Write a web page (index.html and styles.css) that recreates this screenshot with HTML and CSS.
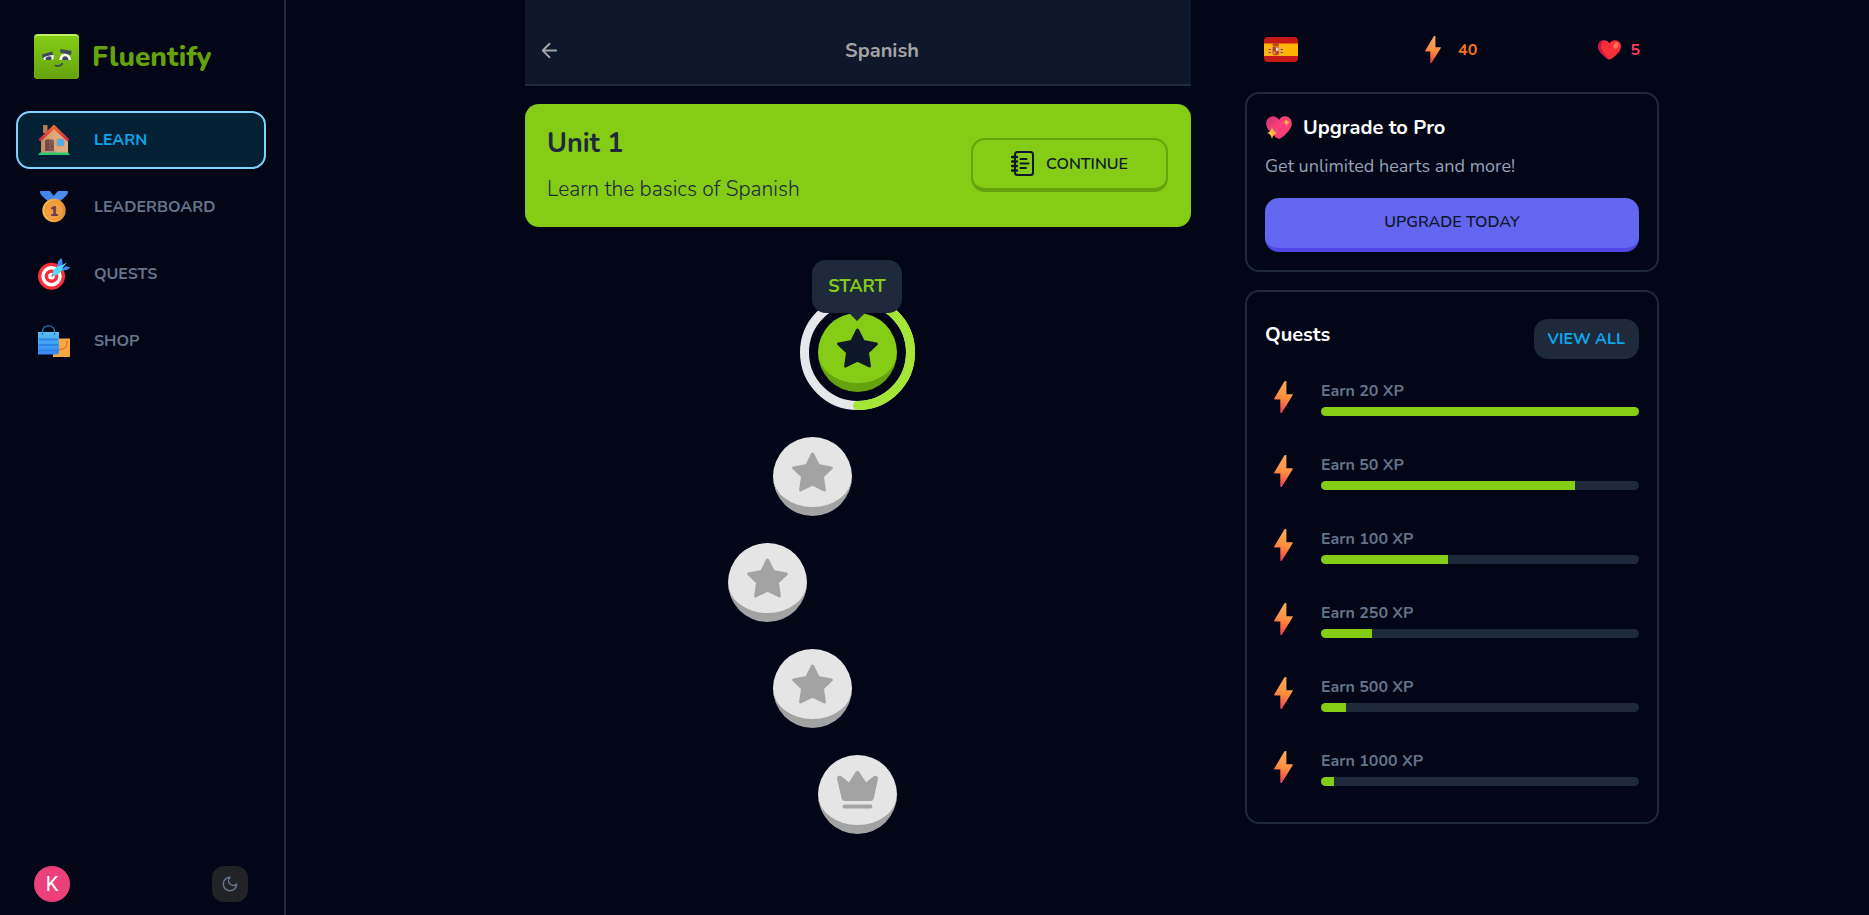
FILE: index.html
```html
<!DOCTYPE html>
<html lang="en">
<head>
<meta charset="utf-8">
<title>Fluentify</title>
<meta name="viewport" content="width=device-width, initial-scale=1">
<link rel="stylesheet" href="styles.css">
</head>
<body>
<svg class="defs" width="0" height="0" aria-hidden="true">
  <defs>
    <linearGradient id="g-bolt" x1="0.6" y1="0" x2="0.4" y2="1"><stop offset="0" stop-color="#f3ad61"/><stop offset=".5" stop-color="#fd9040"/><stop offset=".75" stop-color="#f9663f"/><stop offset="1" stop-color="#e8395a"/></linearGradient>
    <linearGradient id="g-logo" x1="0" y1="0" x2="0" y2="1"><stop offset="0" stop-color="#84cc16"/><stop offset="1" stop-color="#65a30d"/></linearGradient>
    <linearGradient id="g-wall" x1="0" y1="0" x2="1" y2="0"><stop offset="0" stop-color="#c58a5c"/><stop offset=".4" stop-color="#dda677"/><stop offset="1" stop-color="#e2ac82"/></linearGradient>
    <linearGradient id="g-roof" x1="0" y1="0" x2="0" y2="1"><stop offset="0" stop-color="#f4722f"/><stop offset="1" stop-color="#cf2340"/></linearGradient>
    <linearGradient id="g-gold" x1="0" y1="0" x2="1" y2="0"><stop offset="0" stop-color="#ffb648"/><stop offset=".65" stop-color="#f4a13c"/><stop offset="1" stop-color="#d98a35"/></linearGradient>
    <linearGradient id="g-bag" x1="0" y1="0" x2="0" y2="1"><stop offset="0" stop-color="#5cbcf0"/><stop offset=".5" stop-color="#41a4f8"/><stop offset="1" stop-color="#3b86f4"/></linearGradient>
    <linearGradient id="g-pro" x1="0" y1="0" x2="1" y2="1"><stop offset="0" stop-color="#c73470"/><stop offset=".45" stop-color="#ff3f7c"/><stop offset="1" stop-color="#f83a70"/></linearGradient>
    <symbol id="bolt" viewBox="0 0 19 32"><path d="M11.300 0H11.800Q12.400 0 12.400.7V13.300H18.300Q19.200 13.300 18.800 14.100L8 31.500Q7.700 32 7.100 32Q6.300 32 6.300 31.300V18.500H.7Q-.2 18.500.2 17.600L10.300.6Q10.700 0 11.300 0Z" fill="url(#g-bolt)"/></symbol>
    <symbol id="star" viewBox="0 0 124 119"><path d="M62 5 79.500 39.500 119 47 92 73 98 114 62 96.500 26 114 32 73 5 47 44.500 39.500Z" fill="currentColor" stroke="currentColor" stroke-width="9" stroke-linejoin="round"/></symbol>
  </defs>
</svg>
<div class="app">
  <aside class="sidebar">
    <a class="brand" href="#">
      <svg class="brand-logo" viewBox="0 0 45 45" aria-hidden="true">
        <rect width="45" height="45" rx="4" fill="#bef264"/>
        <path d="M0 5Q0 2 3 2H42Q45 2 45 5V41Q45 45 41 45H4Q0 45 0 41Z" fill="url(#g-logo)"/>
        <path d="M8 20.500 18.300 17.600 19.200 21.200 8.600 24Z" fill="#3e4a5b"/>
        <path d="M9.500 24Q11 22 19.500 21Q20.500 25 18 26H11Q9 26 9.500 24Z" fill="#fff"/>
        <path d="M11.500 24Q14 21 17.500 22.800V26H12Z" fill="#3e4a5b"/>
        <path d="M26.500 15 37.600 17 37 21 26.200 18.400Z" fill="#3e4a5b"/>
        <path d="M25.400 26Q26 19.500 31 19.800Q36.400 20 37 26Z" fill="#fff"/>
        <path d="M28 26Q28.300 22.300 31.200 22.300Q34 22.300 34.500 26Z" fill="#3e4a5b"/>
        <path d="M21.500 31.600Q26 33 28.300 29.700" fill="none" stroke="#3e4a5b" stroke-width="2" stroke-linecap="round"/>
      </svg>
      <span class="brand-name">Fluentify</span>
    </a>
    <nav class="nav">
      <a class="nav-item is-active" href="#">
        <svg class="nav-icon" viewBox="0 0 32 32" aria-hidden="true">
          <path d="M5 1.500Q5 1 5.500 1H9Q9.500 1 9.500 1.500V9H5Z" fill="#b97a52"/>
          <path d="M3 15 16 3 30 15V29H3Z" fill="url(#g-wall)"/>
          <path d="M.5 15.500 16 .5 31.500 15.500 29.500 17.500 16 5.200 2.500 17.500Z" fill="url(#g-roof)"/>
          <path d="M7 17.500Q7 15.500 9 15.500H14Q16 15.500 16 17.500V29H7Z" fill="#85584f"/>
          <path d="M7.500 17Q8 15.500 9.500 15.500H11V29H7Z" fill="#744a46"/>
          <circle cx="14" cy="22.500" r=".7" fill="#4d3035"/>
          <rect x="19" y="15" width="7" height="7" rx=".6" fill="#47b2ef" stroke="#c98d61" stroke-width=".6"/>
          <path d="M6 27H17V29H6Z" fill="#ae9790"/>
          <path d="M2 28.500H30L32 31H0Z" fill="#2fca68"/>
        </svg>
        <span>LEARN</span>
      </a>
      <a class="nav-item" href="#">
        <svg class="nav-icon" viewBox="0 0 32 32" aria-hidden="true">
          <path d="M2.500 0H12L18 8 11 11Q2 4 2 1.500Q2 0 2.500 0Z" fill="#4386ea"/>
          <path d="M29.500 0H20L12 9 21 11Q30 4 30 1.500Q30 0 29.500 0Z" fill="#4c8df0"/>
          <circle cx="16" cy="19.500" r="11.700" fill="url(#g-gold)"/>
          <circle cx="16" cy="19.500" r="9" fill="#f0a03e" stroke="#e59136" stroke-width=".8"/>
          <text class="medal-digit" x="16" y="25" text-anchor="middle">1</text>
        </svg>
        <span>LEADERBOARD</span>
      </a>
      <a class="nav-item" href="#">
        <svg class="nav-icon" viewBox="0 0 32 32" aria-hidden="true">
          <circle cx="13.500" cy="18.300" r="13.500" fill="#f5303b"/>
          <circle cx="13.500" cy="18.300" r="10.200" fill="#fff"/>
          <circle cx="13.500" cy="18.300" r="6.800" fill="#f5303b"/>
          <circle cx="13.500" cy="18.300" r="3.300" fill="#fff"/>
          <path d="M14 18 17 14.500" stroke="#81667c" stroke-width="1.500" stroke-linecap="round"/>
          <path d="M19 10 20 3.500 23 .3Q24 .3 24.500 4L24 9.500ZM22 12 28 8.300 32 9.200Q32 10 28.500 12L22.500 13Z" fill="#3d92f5"/>
          <path d="M14.800 13.500Q18 8 22 8L29 4.500 24.500 10Q24 14.500 18.500 17Q16 17.500 14.800 16Z" fill="#50dcff"/>
        </svg>
        <span>QUESTS</span>
      </a>
      <a class="nav-item" href="#">
        <svg class="nav-icon" viewBox="0 0 32 32" aria-hidden="true">
          <path d="M19 13.500H32V32H15V28Z" fill="#f8a93d"/>
          <path d="M29 16Q29.500 25 21 24.500" fill="none" stroke="#e9653a" stroke-width="1.200"/>
          <path d="M4.500 12V6.500C4.500-1 16.500-1 16.500 6.500V12" fill="none" stroke="#2778bd" stroke-width="1.300"/>
          <path d="M0 7H21V28Q20 30 17 29.500H0Z" fill="url(#g-bag)"/>
          <path d="M1 14.500H20M1 20H20M1 25.500H20" stroke="#2e82e8" stroke-width="1.800"/>
          <path d="M4.500 10V7.500M16.500 10V7.500" stroke="#2373b8" stroke-width="1.200"/>
        </svg>
        <span>SHOP</span>
      </a>
    </nav>
    <div class="account">
      <button class="avatar" type="button" aria-label="Account">K</button>
      <button class="theme" type="button" aria-label="Toggle theme">
        <svg viewBox="0 0 24 24" width="18" height="18" fill="none" stroke="currentColor" stroke-width="2" stroke-linecap="round" stroke-linejoin="round"><path d="M12 3a6 6 0 0 0 9 9 9 9 0 1 1-9-9Z"/></svg>
      </button>
    </div>
  </aside>

  <div class="page">
    <main class="course">
      <header class="course-head">
        <button class="back" type="button" aria-label="Back">
          <svg viewBox="0 0 24 24" width="23" height="23" fill="none" stroke="currentColor" stroke-width="2" stroke-linecap="round" stroke-linejoin="round"><path d="m12 19-7-7 7-7M19 12H5"/></svg>
        </button>
        <h1>Spanish</h1>
      </header>
      <section class="unit">
        <div class="unit-text">
          <h2>Unit 1</h2>
          <p>Learn the basics of Spanish</p>
        </div>
        <button class="continue" type="button">
          <svg viewBox="0 0 23 25" width="23" height="25" fill="none" stroke="currentColor" stroke-width="2" stroke-linecap="round" aria-hidden="true"><rect x="4" y="1" width="18" height="23" rx="2.500"/><path d="M1 6H6M1 10.500H6M1 15H6M1 19.500H6" stroke-width="2.400"/><path d="M9.500 8H15.500M9.500 12.500H17.500M9.500 17H15"/></svg>
          <span>CONTINUE</span>
        </button>
      </section>
      <div class="path">
        <div class="current">
          <svg class="ring" viewBox="0 0 115 115" fill="none" stroke-width="9" aria-hidden="true"><circle cx="57.500" cy="57.500" r="53" stroke="#e5e7eb"/><path d="M57.500 4.500A53 53 0 0 1 57.500 110.500" stroke="#a3e635" stroke-linecap="round"/></svg>
          <button class="node node-current" type="button" aria-label="Start lesson"><svg class="node-icon"><use href="#star"/></svg></button>
          <div class="tooltip">START</div>
        </div>
        <button class="node shift-1" type="button" aria-label="Lesson 2"><svg class="node-icon"><use href="#star"/></svg></button>
        <button class="node shift-2" type="button" aria-label="Lesson 3"><svg class="node-icon"><use href="#star"/></svg></button>
        <button class="node shift-1" type="button" aria-label="Lesson 4"><svg class="node-icon"><use href="#star"/></svg></button>
        <button class="node" type="button" aria-label="Final lesson">
          <svg class="node-icon" viewBox="0 0 124 114" fill="currentColor" stroke="currentColor" stroke-linejoin="round" stroke-linecap="round"><path d="M8 22 38 46 62 8 86 46 116 22 103 82H22Z" stroke-width="16"/><path d="M23 107H101" stroke-width="12"/></svg>
        </button>
      </div>
    </main>

    <aside class="side">
      <div class="stats">
        <a class="flag" href="#" aria-label="Spanish">
          <svg viewBox="0 0 34 25" width="34" height="25"><rect width="34" height="25" fill="#c51918"/><rect y="6.500" width="34" height="12.500" fill="#ffb400"/>
            <path d="M5.500 10V18M18 10V18" stroke="#c4b39b" stroke-width="1.600"/><path d="M4.500 12.500H7M16.500 12.500H19M4.500 15.500H7M16.500 15.500H19" stroke="#b33a29"/><path d="M8.500 7Q12 4.500 15 7L14.500 9.500H9Z" fill="#b84527"/><path d="M8.500 10H15V15.500Q15 18.500 11.800 18.500Q8.500 18.500 8.500 15.500Z" fill="#b8423b"/><path d="M12 10.500H14.500V14H12Z" fill="#e8d9df"/><path d="M9 14.500H11.500V17.500Q9 17 9 14.500Z" fill="#e0a02a"/></svg>
        </a>
        <a class="stat stat-xp" href="#"><svg width="16" height="27" aria-hidden="true"><use href="#bolt"/></svg><span>40</span></a>
        <a class="stat stat-hearts" href="#">
          <svg viewBox="0 0 23 20" width="23" height="20" aria-hidden="true"><path d="M11.500 3.300C9.500-.3 5.500-.3 3 1C-.5 3-.7 7.500 1.300 10.800C3.500 14.500 8 18 10.500 19.300Q11.500 19.900 12.500 19.300C15 18 19.500 14.500 21.700 10.800C23.700 7.500 23.500 3 20 1C17.500-.3 13.500-.3 11.500 3.300Z" fill="#f92f38"/><path d="M4 .6C-.5 3-.7 7.500 1.300 10.800C3.500 14.500 8 18 10.500 19.300C8 15 3 11 3 6Q3 2.500 6 .2Z" fill="#c3154b"/><ellipse cx="18" cy="5.500" rx="2.300" ry="3.300" transform="rotate(28 18 5.500)" fill="#ff6f66"/></svg>
          <span>5</span>
        </a>
      </div>

      <section class="card upgrade">
        <h3>
          <svg viewBox="0 0 27 24" width="27" height="24" aria-hidden="true"><path d="M14 4C12-.2 7-.5 4 1.500C.3 4 .5 9.500 3 13C5.500 17 10 21 12.800 22.500Q14 23.200 15.200 22.500C18 21 22.500 17 25 13C27.500 9.500 27.500 4 24 1.500C21-.5 16-.2 14 4Z" fill="url(#g-pro)"/><path d="M7 11Q8 15.500 12 17Q8 18 7 23Q6 18 2 17Q6 16 7 11Z" fill="#ffba4b"/><path d="M21.500 3Q22 6 24.500 6.500Q22 7 21.500 10Q21 7 18.500 6.500Q21 6 21.500 3Z" fill="#ffb24a"/></svg>
          Upgrade to Pro
        </h3>
        <p>Get unlimited hearts and more!</p>
        <button class="upgrade-btn" type="button">UPGRADE TODAY</button>
      </section>

      <section class="card quests">
        <div class="quests-head"><h3>Quests</h3><a class="view-all" href="#">VIEW ALL</a></div>
        <ul class="quest-list">
          <li class="quest"><svg class="quest-icon" aria-hidden="true"><use href="#bolt"/></svg><div class="quest-body"><p>Earn 20 XP</p><div class="bar" role="progressbar" aria-label="Earn 20 XP" aria-valuenow="100"><div class="bar-fill" style="width:100%"></div></div></div></li>
          <li class="quest"><svg class="quest-icon" aria-hidden="true"><use href="#bolt"/></svg><div class="quest-body"><p>Earn 50 XP</p><div class="bar" role="progressbar" aria-label="Earn 50 XP" aria-valuenow="80"><div class="bar-fill" style="width:80%"></div></div></div></li>
          <li class="quest"><svg class="quest-icon" aria-hidden="true"><use href="#bolt"/></svg><div class="quest-body"><p>Earn 100 XP</p><div class="bar" role="progressbar" aria-label="Earn 100 XP" aria-valuenow="40"><div class="bar-fill" style="width:40%"></div></div></div></li>
          <li class="quest"><svg class="quest-icon" aria-hidden="true"><use href="#bolt"/></svg><div class="quest-body"><p>Earn 250 XP</p><div class="bar" role="progressbar" aria-label="Earn 250 XP" aria-valuenow="16"><div class="bar-fill" style="width:16%"></div></div></div></li>
          <li class="quest"><svg class="quest-icon" aria-hidden="true"><use href="#bolt"/></svg><div class="quest-body"><p>Earn 500 XP</p><div class="bar" role="progressbar" aria-label="Earn 500 XP" aria-valuenow="8"><div class="bar-fill" style="width:8%"></div></div></div></li>
          <li class="quest"><svg class="quest-icon" aria-hidden="true"><use href="#bolt"/></svg><div class="quest-body"><p>Earn 1000 XP</p><div class="bar" role="progressbar" aria-label="Earn 1000 XP" aria-valuenow="4"><div class="bar-fill" style="width:4%"></div></div></div></li>
        </ul>
      </section>
    </aside>
  </div>
</div>
</body>
</html>
```
FILE: styles.css
```css
* { box-sizing: border-box; }
body {
  margin: 0;
  background: #020617;
  color: #fff;
  font-family: Nunito, Lato, "Open Sans", sans-serif;
  font-size: 16px;
  line-height: 24px;
}
h1, h2, h3, p, ul { margin: 0; padding: 0; }
ul { list-style: none; }
a { color: inherit; text-decoration: none; }
button { font: inherit; color: inherit; margin: 0; padding: 0; border: 0; background: none; cursor: pointer; }
svg { display: block; flex: none; }
.defs { position: absolute; }

.app { display: flex; min-height: 100vh; }

.sidebar {
  position: sticky;
  top: 0;
  display: flex;
  flex-direction: column;
  flex: none;
  width: 286px;
  height: 100vh;
  padding: 34px 18px 13px 16px;
  border-right: 2px solid #1e293b;
}
.brand { display: flex; align-items: center; gap: 13px; padding: 0 18px; margin-bottom: 32px; }
.brand-logo { width: 45px; height: 45px; }
.brand-name { font-size: 28px; line-height: 36px; font-weight: 800; color: #65a30d; }
.nav { display: flex; flex: 1; flex-direction: column; gap: 9px; }
.nav-item {
  display: flex;
  align-items: center;
  gap: 24px;
  height: 58px;
  padding: 0 20px;
  border: 2px solid transparent;
  border-radius: 14px;
  color: #64748b;
  font-weight: 700;
}
.nav-item.is-active { background: #032035; border-color: #7dd3fc; color: #0ea5e9; }
.nav-icon { width: 32px; height: 32px; }
.medal-digit { font-size: 14px; font-weight: 900; fill: #73375a; }
.account { display: flex; justify-content: space-between; padding: 0 18px; }
.avatar {
  width: 36px;
  height: 36px;
  border-radius: 50%;
  background: #ec407a;
  color: #fff;
  font-family: Roboto, sans-serif;
  font-size: 20px;
}
.theme {
  display: grid;
  place-items: center;
  width: 36px;
  height: 36px;
  border-radius: 12px;
  background: #212327;
  color: #64748b;
}

.page {
  display: flex;
  flex: 1;
  justify-content: center;
  gap: 54px;
  min-width: 0;
  padding-left: 29px;
}
.course { flex: 0 1 666px; min-width: 0; }
.course-head {
  display: flex;
  align-items: center;
  height: 86px;
  margin-bottom: 18px;
  padding-top: 17px;
  border-bottom: 2px solid #1e293b;
  background: #0f172a;
  color: #a3a3a3;
}
.back { display: grid; place-items: center; width: 48px; height: 45px; }
.course-head h1 { flex: 1; text-align: center; font-size: 20px; line-height: 28px; font-weight: 700; }

.unit {
  display: flex;
  align-items: center;
  justify-content: space-between;
  height: 123px;
  padding: 0 23px 2px 22px;
  border-radius: 14px;
  background: #84cc16;
  color: #1e293b;
}
.unit-text { display: flex; flex-direction: column; gap: 12px; }
.unit h2 { font-size: 27px; line-height: 36px; font-weight: 700; }
.unit p { font-size: 21px; line-height: 30px; font-weight: 300; }
.continue {
  display: flex;
  align-items: center;
  justify-content: center;
  gap: 12px;
  width: 197px;
  height: 54px;
  border: 2px solid #65a30d;
  border-bottom-width: 4px;
  border-radius: 14px;
  color: #0f172a;
  font-weight: 600;
}

.path { display: flex; flex-direction: column; align-items: center; gap: 27px; padding: 68px 2px 0 0; }
.current { position: relative; display: grid; place-items: center; width: 115px; height: 115px; }
.ring { position: absolute; inset: 0; }
.node {
  display: grid;
  place-items: center;
  width: 79px;
  height: 79px;
  border-bottom: 9px solid #a3a3a3;
  border-radius: 50%;
  background: #e5e5e5;
  color: #a3a3a3;
}
.node-icon { width: 41px; height: 40px; }
.node-current { border-color: #65a30d; background: #84cc16; color: #0f172a; }
.shift-1 { margin-right: 90px; }
.shift-2 { margin-right: 180px; }
.tooltip {
  position: absolute;
  bottom: 97px;
  padding: 13px 16px;
  border-radius: 14px;
  background: #1e293b;
  color: #84cc16;
  font-size: 18px;
  line-height: 27px;
  font-weight: 700;
}
.tooltip::after {
  content: "";
  position: absolute;
  top: 100%;
  left: 50%;
  margin-left: -8px;
  border: 8px solid transparent;
  border-top-color: #1e293b;
  border-bottom: 0;
}

.side { flex: 0 1 414px; min-width: 0; padding-top: 36px; }
.stats { display: flex; align-items: center; justify-content: space-between; height: 27px; margin-bottom: 29px; padding: 0 19px; }
.flag { overflow: hidden; border-radius: 4px; }
.stat { display: flex; align-items: center; font-weight: 700; }
.stat-xp { gap: 17px; padding-left: 6px; color: #f97316; }
.stat-hearts { gap: 9px; color: #f43f5e; }

.card { border: 2px solid #1e293b; border-radius: 14px; padding: 18px; }
.card h3 { display: flex; align-items: center; gap: 11px; font-size: 20px; line-height: 32px; font-weight: 700; }
.upgrade { margin-bottom: 18px; }
.upgrade p { margin: 9px 0 18px; font-size: 18px; line-height: 27px; color: #94a3b8; }
.upgrade-btn {
  display: block;
  width: 100%;
  height: 54px;
  padding-bottom: 2px;
  border-bottom: 4px solid #4f46e5;
  border-radius: 14px;
  background: #6366f1;
  color: #0f172a;
  font-weight: 600;
}
.quests { padding-top: 27px; }
.quests-head { display: flex; align-items: flex-start; justify-content: space-between; }
.view-all { padding: 8px 14px; border-radius: 14px; background: #1e293b; color: #0ea5e9; font-weight: 700; }
.quest-list { padding-top: 1px; }
.quest { display: flex; align-items: center; gap: 28px; height: 74px; padding-left: 9px; }
.quest-icon { width: 19px; height: 32px; }
.quest-body { display: flex; flex: 1; flex-direction: column; gap: 4px; color: #64748b; font-weight: 700; }
.bar { height: 9px; overflow: hidden; border-radius: 9px; background: #1e293b; }
.bar-fill { height: 100%; background: #84cc16; }
```
